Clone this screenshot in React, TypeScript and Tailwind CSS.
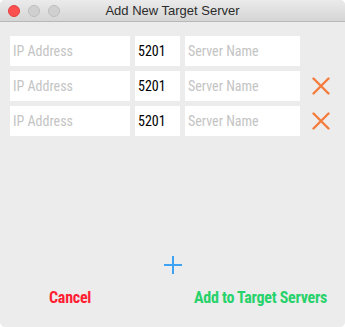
const rows = [
  { removable: false },
  { removable: true },
  { removable: true },
];

const field =
  "h-[30px] bg-white px-[3px] text-[14px] text-black placeholder:text-[#c4c4c4] outline-none";

const RemoveIcon = () => (
  <svg width="18" height="18" viewBox="0 0 18 18" className="ml-[7px]">
    <path d="M1.5 1.5 L16.5 16.5 M16.5 1.5 L1.5 16.5" stroke="#f47c3c" strokeWidth="2.4" strokeLinecap="round" />
  </svg>
);

export default function App() {
  return (
    <div className="w-[345px] h-[327px] bg-white">
      <div
        className="flex h-full flex-col overflow-hidden rounded-[5px] bg-[#ececec]"
        style={{ fontFamily: '"Roboto Condensed", Roboto, sans-serif' }}
      >
        {/* title bar */}
        <div className="relative flex h-[22px] items-center justify-center border-b border-[#b8b8b8] bg-gradient-to-b from-[#ebebeb] to-[#d5d5d5]">
          <div className="absolute left-[8px] top-[5px] flex gap-[8px]">
            <span className="h-[12px] w-[12px] rounded-full bg-[#fc4f4f] border border-[#e33e3e]" />
            <span className="h-[12px] w-[12px] rounded-full bg-[#d0d0d0] border border-[#bdbdbd]" />
            <span className="h-[12px] w-[12px] rounded-full bg-[#d0d0d0] border border-[#bdbdbd]" />
          </div>
          <span className="font-['Liberation_Sans',sans-serif] text-[13px] text-[#2b2b2b]">
            Add New Target Server
          </span>
        </div>

        <div className="flex flex-col gap-[5px] px-[10px] pt-[14px]">
          {rows.map((r, i) => (
            <div key={i} className="flex items-center gap-[5px]">
              <input className={`${field} w-[120px]`} placeholder="IP Address" />
              <input className={`${field} w-[45px]`} defaultValue="5201" />
              <input className={`${field} w-[115px]`} placeholder="Server Name" />
              {r.removable && <RemoveIcon />}
            </div>
          ))}
        </div>

        <div className="mt-auto flex justify-center pb-[12px] pl-[1px]">
          <svg width="18" height="18" viewBox="0 0 18 18">
            <path d="M9 0 V18 M0 9 H18" stroke="#3ea3f5" strokeWidth="2" />
          </svg>
        </div>
        <div className="flex items-center justify-between pb-[17px] pl-[49px] pr-[18px]">
          <button className="text-[16px] font-bold tracking-[-0.25px] text-[#ff1f33]">Cancel</button>
          <button className="text-[16px] font-bold tracking-[-0.25px] text-[#27d26a]">
            Add to Target Servers
          </button>
        </div>
      </div>
    </div>
  );
}
